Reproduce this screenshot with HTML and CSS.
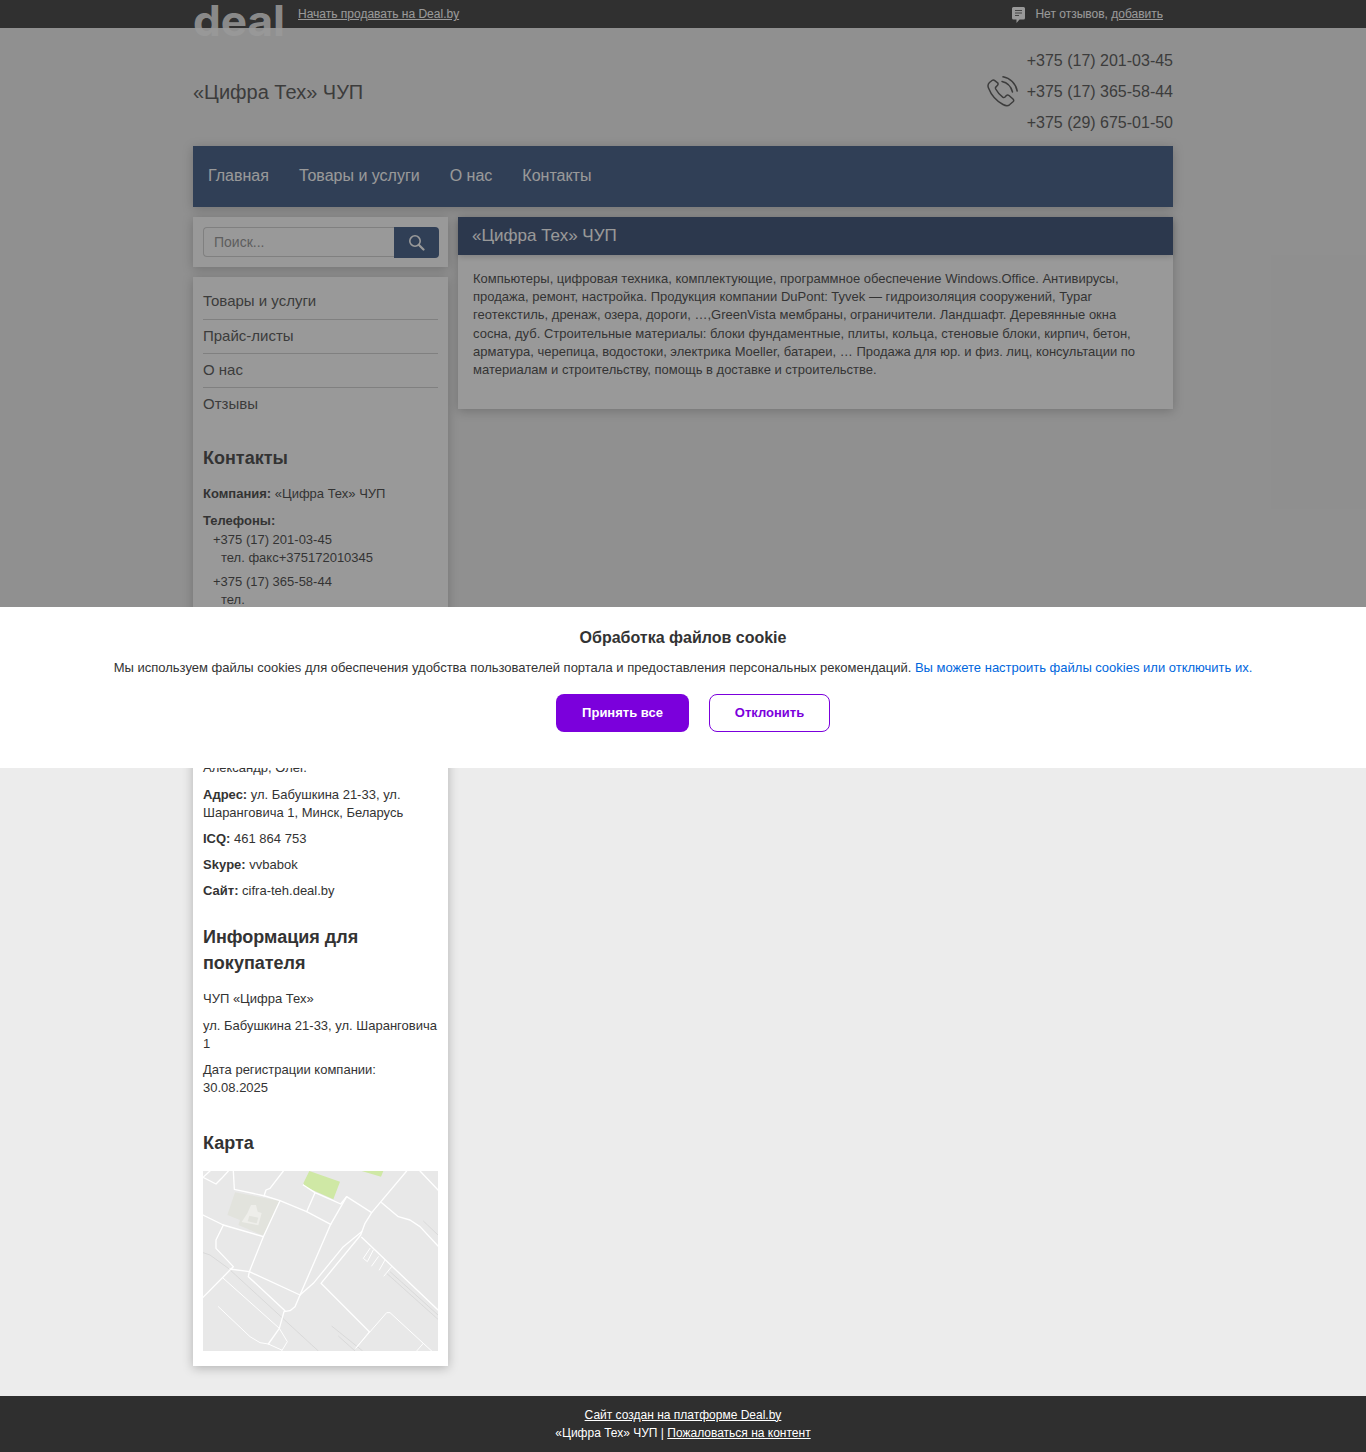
FILE: index.html
```html
<!DOCTYPE html>
<html lang="ru">
<head>
<meta charset="utf-8">
<title>«Цифра Тех» ЧУП</title>
<link rel="stylesheet" href="styles.css">
</head>
<body>
<div class="topbar">
  <div class="wrap topbar-in">
    <div class="topbar-left">
      <div class="logo-box"><span class="logo">deal</span></div>
      <a class="sell" href="#">Начать продавать на Deal.by</a>
    </div>
    <div class="reviews">
      <svg class="review-ico" width="13" height="16" viewBox="0 0 13 16"><path fill="#fff" d="M1.500 0h10A1.500 1.500 0 0 1 13 1.500v9.500a1.500 1.500 0 0 1-1.500 1.500H7.500L4.500 16v-3.500h-3A1.500 1.500 0 0 1 0 11V1.500A1.500 1.500 0 0 1 1.500 0z"/><path stroke="#555" stroke-width="1" d="M3 3.500h7M3 6h7M3 8.500h4"/></svg>
      <span class="review-text">Нет отзывов, <a href="#">добавить</a></span>
    </div>
  </div>
</div>

<div class="wrap">
  <header class="head">
    <div class="company">«Цифра Тех» ЧУП</div>
    <div class="phones">
      <svg class="phone-ico" width="31" height="31" viewBox="0 0 31 31" fill="none" stroke="#444" stroke-width="1.500" stroke-linecap="round" stroke-linejoin="round"><path d="M5 4.500 2.500 6.500C.8 8 .7 10 1.500 12c2.500 6.500 8 13 14.500 16.500 2.500 1.300 4.700 1.700 6.500.3l3.500-3c1-.9.9-2 0-2.800l-4-3.500c-.9-.7-1.800-.7-2.600 0L18 21c-.7.600-1.500.6-2.300.1-2.900-2.100-5.300-5-7-8.100-.4-.8-.3-1.500.3-2.100l1.500-1.600c.7-.8.700-1.700.1-2.500L7.800 4.700C7 3.800 6 3.700 5 4.500z"/><path d="M15 5.500c5 1 9 5 10.500 10.500"/><path d="M16 .8c7 1.200 12.800 6.700 14.200 14.200"/></svg>
      <div class="phone-list">
        <div>+375 (17) 201-03-45</div>
        <div>+375 (17) 365-58-44</div>
        <div>+375 (29) 675-01-50</div>
      </div>
    </div>
  </header>

  <nav class="nav">
    <a href="#">Главная</a>
    <a href="#">Товары и услуги</a>
    <a href="#">О нас</a>
    <a href="#">Контакты</a>
  </nav>

  <div class="cols">
    <aside class="side">
      <form class="card search">
        <div class="search-input">Поиск...</div>
        <button class="search-btn" type="button" aria-label="Поиск">
          <svg width="17" height="17" viewBox="0 0 17 17" fill="none" stroke="#fff" stroke-width="1.600"><circle cx="7" cy="7" r="5.200"/><path stroke-width="2.200" stroke-linecap="round" d="m11 11 4.500 4.500"/></svg>
        </button>
      </form>

      <div class="card side-main">
        <ul class="menu">
          <li><a href="#">Товары и услуги</a></li>
          <li><a href="#">Прайс-листы</a></li>
          <li><a href="#">О нас</a></li>
          <li><a href="#">Отзывы</a></li>
        </ul>

        <h3 class="contacts-h">Контакты</h3>
        <p class="first-p"><b>Компания:</b> «Цифра Тех» ЧУП</p>
        <p class="phones-title"><b>Телефоны:</b></p>
        <div class="ph">+375 (17) 201-03-45<div class="ph-note">тел. факс+375172010345</div></div>
        <div class="ph">+375 (17) 365-58-44<div class="ph-note">тел.</div></div>
        <div class="ph ph-last">+375 (29) 675-01-50<div class="ph-note">тел.</div></div>
        <p><b>Факс:</b> +375 (17) 201-03-45</p>
        <p><b>Email:</b> cifra-teh@deal.by</p>
        <p><b>Контактное лицо:</b><br>Вячеслав,<br>Александр, Олег.</p>
        <p><b>Адрес:</b> ул. Бабушкина 21-33, ул. Шаранговича 1, Минск, Беларусь</p>
        <p><b>ICQ:</b> 461 864 753</p>
        <p><b>Skype:</b> vvbabok</p>
        <p><b>Сайт:</b> cifra-teh.deal.by</p>

        <h3 class="info-h">Информация для покупателя</h3>
        <p class="first-p">ЧУП «Цифра Тех»</p>
        <p>ул. Бабушкина 21-33, ул. Шаранговича 1</p>
        <p>Дата регистрации компании: 30.08.2025</p>

        <h3 class="map-h">Карта</h3>
        <svg class="map" width="235" height="180" viewBox="39 33 705 540">
          <rect x="39" y="33" width="705" height="540" fill="#e8e8e8"/>
          <path fill="#e2e3dd" d="M135 97 268 122 222 228 145 195 150 180 112 165z"/>
          <path fill="#eeeeea" d="M183 135h15l5 20 12 4-10 37-50-10 17-26z"/>
          <path fill="#e2e3dd" d="M178 167l27 6-5 17-27-6z"/>
          <path fill="#cfe8a5" d="M358 33 450 65 430 118 345 80 340 70zM515 33h65l-7 17z"/>
          <g fill="none" stroke="#d2d2d2" stroke-width="2">
            <path d="M39 278 60 285 115 325 385 573"/>
            <path d="M425 498 518 573M445 528 495 573"/>
            <path d="M590 340 744 478M600 335 744 465"/>
            <path d="M700 183 744 225"/>
          </g>
          <g fill="none" stroke="#fff" stroke-width="4" stroke-linejoin="round" stroke-linecap="round">
            <path d="M60 33 39 52 78 72 95 55 115 33M130 33 133 88 225 108 270 122 350 155 422 193"/>
            <path d="M280 33 240 85 228 90 222 108"/>
            <path d="M340 75 375 98 430 122 452 132 470 110 545 158M375 98 350 155"/>
            <path d="M270 122 220 230 178 335 175 350 285 452"/>
            <path d="M39 165 100 195 220 230"/>
            <path d="M100 195 78 240 78 265 130 320 120 330 39 412M120 327 178 335 330 405"/>
            <path d="M470 110 422 193 330 405 315 440 300 452 282 455 268 505 235 552"/>
            <path d="M330 405 370 370 460 260 515 215"/>
            <path d="M650 33 545 158 525 190 512 225 393 370 538 515"/>
            <path d="M515 232 744 450"/>
            <path d="M575 128 625 170 660 180 690 200 744 258M690 33 744 90"/>
          </g>
          <g fill="none" stroke="#fff" stroke-width="3" stroke-linejoin="round" stroke-linecap="round">
            <path d="M100 355 268 505 292 545 275 573"/>
            <path d="M85 440 180 530 210 548 235 552 275 570"/>
            <path d="M538 515 497 565 590 458 600 458 725 573M700 550 680 573"/>
            <path d="M540 265 520 295 532 305 550 270M565 290 545 318M585 300 568 330M605 320 582 348"/>
          </g>
        </svg>
      </div>
    </aside>

    <main class="main">
      <h1 class="main-title">«Цифра Тех» ЧУП</h1>
      <div class="main-body">Компьютеры, цифровая техника, комплектующие, программное обеспечение Windows.Office. Антивирусы, продажа, ремонт, настройка. Продукция компании DuPont: Tyvek — гидроизоляция сооружений, Typar геотекстиль, дренаж, озера, дороги, …,GreenVista мембраны, ограничители. Ландшафт. Деревянные окна сосна, дуб. Строительные материалы: блоки фундаментные, плиты, кольца, стеновые блоки, кирпич, бетон, арматура, черепица, водостоки, электрика Moeller, батареи, … Продажа для юр. и физ. лиц, консультации по материалам и строительству, помощь в доставке и строительстве.</div>
    </main>
  </div>
</div>

<footer class="foot">
  <div><a href="#">Сайт создан на платформе Deal.by</a></div>
  <div>«Цифра Тех» ЧУП | <a href="#">Пожаловаться на контент</a></div>
</footer>

<div class="overlay"></div>
<section class="cookie">
  <h2 class="cookie-title">Обработка файлов cookie</h2>
  <p class="cookie-text">Мы используем файлы cookies для обеспечения удобства пользователей портала и предоставления персональных рекомендаций. <a href="#">Вы можете настроить файлы cookies или отключить их.</a></p>
  <div class="cookie-btns">
    <button class="btn btn-accept" type="button">Принять все</button>
    <button class="btn btn-decline" type="button">Отклонить</button>
  </div>
</section>
</body>
</html>
```
FILE: styles.css
```css
* { box-sizing: border-box; }
html, body { margin: 0; padding: 0; }
body {
  background: #ececec;
  color: #333;
  font-family: "Liberation Sans", Arial, sans-serif;
  font-size: 13px;
  line-height: 18.2px;
}
a { color: inherit; }
.wrap { width: 980px; margin: 0 auto; }

.topbar { height: 28px; background: #2d2d2d; color: #fff; font-size: 12px; line-height: 28px; }
.topbar-in { display: flex; justify-content: space-between; }
.topbar-left { display: flex; }
.logo-box { width: 105px; height: 28px; }
.logo {
  display: inline-block;
  font-family: Inter, "Liberation Sans", sans-serif;
  font-weight: 700;
  font-size: 42px;
  line-height: 42px;
  color: rgba(255, 255, 255, .87);
  transform: scaleX(1.05);
  transform-origin: left center;
}
.reviews { display: flex; align-items: center; padding-right: 10px; }
.review-ico { margin: 2px 10px 0 0; }

.head { height: 118px; display: flex; justify-content: space-between; align-items: center; font-size: 20px; color: #444; }
.company { padding-top: 10px; }
.phones { display: flex; align-items: center; padding-top: 9px; font-size: 16px; line-height: 31px; }
.phone-ico { margin-right: 9px; }

.nav {
  height: 61px;
  display: flex;
  align-items: center;
  gap: 30px;
  padding-left: 15px;
  background: #2c4a78;
  font-size: 16px;
  color: #fff;
  box-shadow: 0 2px 10px rgba(0, 0, 0, .25);
}
.nav a { text-decoration: none; }

.cols { display: flex; align-items: flex-start; gap: 10px; margin-top: 10px; }
.side { width: 255px; display: flex; flex-direction: column; gap: 10px; }
.card { background: #fff; box-shadow: 0 2px 10px rgba(0, 0, 0, .25); }

.search { height: 50px; display: flex; padding: 10px 9px 0 10px; }
.search-input {
  width: 191px;
  height: 30px;
  padding-left: 10px;
  border: 1px solid #ccc;
  border-right: 0;
  border-radius: 4px 0 0 4px;
  background: #fff;
  font-size: 14px;
  line-height: 28px;
  color: #888;
}
.search-btn {
  width: 45px;
  height: 31px;
  display: flex;
  align-items: center;
  justify-content: center;
  padding: 0;
  border: 0;
  border-radius: 0 4px 4px 0;
  background: #2c4a78;
}

.side-main { padding: 7px 10px 15px; }
.menu { list-style: none; margin: 0; padding: 0; font-size: 15px; line-height: 33px; }
.menu li { padding-bottom: 1px; }
.menu li:first-child { padding-bottom: 2px; }
.menu li + li { border-top: 1px solid #ccc; }
.menu li + li a { margin-top: -1px; }
.menu a { display: block; color: #444; text-decoration: none; }
.side-main h3 { margin: 0; font-size: 18px; line-height: 26px; font-weight: 700; color: #333; }
.contacts-h { padding-top: 24px; }
.info-h { padding-top: 23.8px; }
.map-h { padding-top: 32.5px; }
.side-main p { margin: 8px 0 0; }
.side-main .first-p { margin-top: 14px; }
.side-main .phones-title { margin: 9px 0 1px; }
.ph { padding-left: 10px; margin-bottom: 6px; line-height: 18px; }
.ph-last { margin-bottom: 19.1px; }
.ph-note { padding-left: 8px; }
.map { display: block; margin-top: 15px; }

.main { flex: 1; background: #fff; box-shadow: 0 2px 10px rgba(0, 0, 0, .25); }
.main-title {
  margin: 0;
  height: 38px;
  padding-left: 14px;
  background: #253c66;
  color: #fff;
  font-size: 17px;
  font-weight: 400;
  line-height: 37px;
  box-shadow: 0 2px 6px rgba(0, 0, 0, .2);
}
.main-body { padding: 15px 25px 30px 15px; }

.foot {
  height: 56px;
  margin-top: 30px;
  padding-top: 10px;
  background: #2f2f2f;
  color: #fff;
  font-size: 12px;
  line-height: 18px;
  text-align: center;
}

.overlay { position: absolute; left: 0; top: 0; width: 100%; height: 768px; background: rgba(51, 51, 51, .5); }
.cookie {
  position: absolute;
  left: 0;
  top: 607px;
  width: 100%;
  height: 161px;
  padding-top: 21px;
  background: #fff;
  text-align: center;
}
.cookie-title { margin: 0; font-size: 16px; line-height: 20px; font-weight: 700; color: #333; }
.cookie-text { margin: 10px 0 0; font-size: 13px; line-height: 20px; color: #333; }
.cookie-text a { color: #0066dd; text-decoration: none; }
.cookie-btns { display: flex; justify-content: center; gap: 20px; margin-top: 16px; padding-left: 20px; }
.btn { height: 38px; padding: 0 0 2px; border-radius: 8px; font-family: inherit; font-size: 13px; font-weight: 700; }
.btn-accept { width: 133px; border: 0; background: #7b00dc; color: #fff; }
.btn-decline { width: 121px; border: 1px solid #7b00dc; background: #fff; color: #7b00dc; }
```
